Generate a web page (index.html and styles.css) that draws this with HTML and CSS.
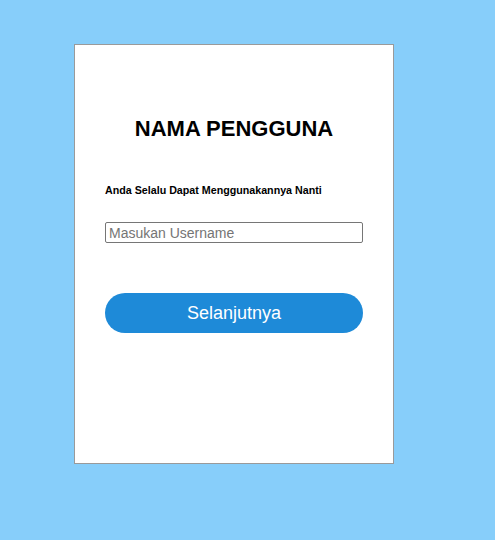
FILE: index.html
```html
<!DOCTYPE html>
<html>
<head>
<meta charset="utf-8">
<link rel="stylesheet" href="styles.css">
</head>
<body>
<div class="card">
  <h1 class="title">NAMA PENGGUNA</h1>
  <p class="hint">Anda Selalu Dapat Menggunakannya Nanti</p>
  <input class="field" type="text" placeholder="Masukan Username">
  <button class="next">Selanjutnya</button>
</div>
</body>
</html>
```
FILE: styles.css
```css
html, body {
  margin: 0;
  padding: 0;
  background: #87cefa;
  font-family: "Liberation Sans", Arial, sans-serif;
  height: 100%;
}
body {
  padding: 44px 0 0 74px;
  box-sizing: border-box;
}
.card {
  width: 320px;
  height: 420px;
  box-sizing: border-box;
  background: #fff;
  border: 1px solid #9a9a9a;
  padding: 71px 30px 0 30px;
  display: flex;
  flex-direction: column;
}
.title {
  margin: 0;
  font-size: 22px;
  line-height: 25px;
  font-weight: bold;
  text-align: center;
  color: #000;
}
.hint {
  margin: 43px 0 0 0;
  font-size: 10.7px;
  line-height: 13px;
  font-weight: bold;
  color: #000;
}
.field {
  margin: 25px 0 0 0;
  width: 258px;
  height: 21px;
  box-sizing: border-box;
  border: 1px solid #767676;
  border-radius: 2px;
  padding: 0 3px;
  font-family: "Liberation Sans", Arial, sans-serif;
  font-size: 14px;
  color: #000;
}
.field::placeholder {
  color: #757575;
}
.next {
  margin: 50px 0 0 0;
  width: 258px;
  height: 40px;
  border: none;
  border-radius: 20px;
  background: #1e8ad8;
  color: #fff;
  font-family: "Liberation Sans", Arial, sans-serif;
  font-size: 18px;
  cursor: pointer;
}
```
